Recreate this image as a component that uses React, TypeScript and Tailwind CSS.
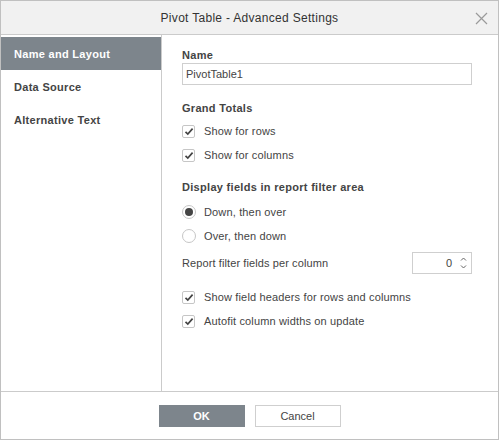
import React from "react";

const font = { fontFamily: '"Liberation Sans", Arial, sans-serif' };

function Check() {
  return (
    <span className="flex h-[13px] w-[13px] items-center justify-center rounded-[2px] border border-[#c6c6c6] bg-white">
      <svg width="10" height="9" viewBox="0 0 10 9">
        <path d="M1.5 4.8 L3.8 7 L8.6 1.6" fill="none" stroke="#444" strokeWidth="1.7" />
      </svg>
    </span>
  );
}

function Radio({ on }: { on?: boolean }) {
  return (
    <span className="flex h-[14px] w-[14px] items-center justify-center rounded-full border border-[#c6c6c6] bg-white">
      {on && <span className="h-[8px] w-[8px] rounded-full bg-[#444]" />}
    </span>
  );
}

function Row({ children, label }: { children: React.ReactNode; label: string }) {
  return (
    <div className="flex h-[24px] items-center">
      <span className="flex w-[22px]">{children}</span>
      <span className="text-[11px] tracking-[0.15px] text-[#444]">{label}</span>
    </div>
  );
}

export default function App() {
  const tabs = ["Name and Layout", "Data Source", "Alternative Text"];
  return (
    <div
      style={font}
      className="flex h-[440px] w-[499px] flex-col border border-[#c0c0c0] bg-white text-[#444]"
    >
      <div className="relative flex h-[34px] shrink-0 items-center justify-center border-b border-[#cbcbcb] bg-[#f1f1f1]">
        <span className="text-[12px] tracking-[0.3px] text-[#333]">Pivot Table - Advanced Settings</span>
        <svg className="absolute right-[10px] top-[11px]" width="13" height="13" viewBox="0 0 13 13">
          <path d="M1 1 L12 12 M12 1 L1 12" stroke="#9a9a9a" strokeWidth="1.2" />
        </svg>
      </div>

      <div className="flex flex-1">
        <div className="w-[161px] shrink-0 border-r border-[#cbcbcb] pt-[2px]">
          {tabs.map((t, i) => (
            <div
              key={t}
              className={
                i === 0
                  ? "flex h-[33px] items-center bg-[#7d858c] pl-[13px] pt-[2px] text-[11px] font-bold tracking-[0.3px] text-white"
                  : "flex h-[33px] items-center pl-[13px] pt-[2px] text-[11px] font-bold tracking-[0.3px] text-[#444]"
              }
            >
              {t}
            </div>
          ))}
        </div>

        <div className="flex-1 pl-[20px] pr-[26px] pt-[13px]">
          <div className="h-[14px] text-[11px] font-bold leading-[14px] tracking-[0.3px]">Name</div>
          <div className="mt-[1px] flex h-[22px] items-center border border-[#cfcfcf] px-[3px] text-[11px]">
            PivotTable1
          </div>

          <div className="mt-[16px] h-[14px] text-[11px] font-bold leading-[14px] tracking-[0.3px]">Grand Totals</div>
          <div className="mt-[4px]">
            <Row label="Show for rows"><Check /></Row>
            <Row label="Show for columns"><Check /></Row>
          </div>

          <div className="mt-[13px] h-[14px] text-[11px] font-bold leading-[14px] tracking-[0.3px]">
            Display fields in report filter area
          </div>
          <div className="mt-[6px]">
            <Row label="Down, then over"><Radio on /></Row>
            <Row label="Over, then down"><Radio /></Row>
          </div>

          <div className="mt-[4px] flex h-[22px] items-center justify-between">
            <span className="text-[11px] tracking-[0.1px]">Report filter fields per column</span>
            <div className="flex h-[22px] w-[60px] items-center justify-end border border-[#cfcfcf] pr-[4px]">
              <span className="text-[11px]">0</span>
              <svg className="ml-[8px]" width="7" height="14" viewBox="0 0 7 14">
                <path d="M1 4.5 L3.5 2 L6 4.5 M1 9.5 L3.5 12 L6 9.5" fill="none" stroke="#666" strokeWidth="1" />
              </svg>
            </div>
          </div>

          <div className="mt-[11px]">
            <Row label="Show field headers for rows and columns"><Check /></Row>
            <Row label="Autofit column widths on update"><Check /></Row>
          </div>
        </div>
      </div>

      <div className="flex h-[48px] shrink-0 justify-center gap-[10px] border-t border-[#cbcbcb] pt-[13px]">
        <button className="h-[22px] w-[86px] bg-[#7d858c] text-[11px] font-bold text-white">OK</button>
        <button className="h-[22px] w-[86px] border border-[#cfcfcf] bg-white text-[11px] text-[#444]">Cancel</button>
      </div>
    </div>
  );
}
